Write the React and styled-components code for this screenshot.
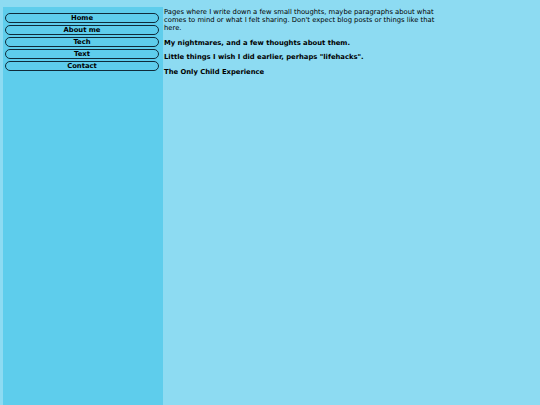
import React from 'react';
import styled, { createGlobalStyle } from 'styled-components';

const GlobalStyle = createGlobalStyle`
  html, body {
    margin: 0;
    padding: 0;
    background: #8ddbf2;
    font-family: "DejaVu Sans", Verdana, sans-serif;
  }
`;

const Page = styled.div`
  display: flex;
  align-items: stretch;
  min-height: 405px;
  box-sizing: border-box;
  padding: 7px 0 0 3px;
`;

const Sidebar = styled.nav`
  width: 160px;
  flex-shrink: 0;
  background: #5ecdec;
  box-sizing: border-box;
  padding: 6px 4px 0 2px;
  display: flex;
  flex-direction: column;
  gap: 2px;
`;

const NavButton = styled.a`
  display: block;
  height: 10px;
  box-sizing: border-box;
  border: 1px solid #0f2b3a;
  border-radius: 5px;
  font-size: 6.8px;
  line-height: 8px;
  font-weight: bold;
  text-align: center;
  color: #000;
  text-decoration: none;
`;

const Main = styled.main`
  width: 282px;
  padding-left: 1px;
  color: #000;
  font-size: 6.8px;
  line-height: 8px;
`;

const Intro = styled.p`
  margin: 1px 0 0;
`;

const Entry = styled.p`
  margin: 6.5px 0 0;
  font-weight: bold;
`;

const links = ['Home', 'About me', 'Tech', 'Text', 'Contact'];

export default function App() {
  return (
    <>
      <GlobalStyle />
      <Page>
        <Sidebar>
          {links.map((l) => (
            <NavButton key={l} href="#">{l}</NavButton>
          ))}
        </Sidebar>
        <Main>
          <Intro>
            Pages where I write down a few small thoughts, maybe paragraphs about what
            comes to mind or what I felt sharing. Don't expect blog posts or things like that
            here.
          </Intro>
          <Entry>My nightmares, and a few thoughts about them.</Entry>
          <Entry>Little things I wish I did earlier, perhaps "lifehacks".</Entry>
          <Entry>The Only Child Experience</Entry>
        </Main>
      </Page>
    </>
  );
}
